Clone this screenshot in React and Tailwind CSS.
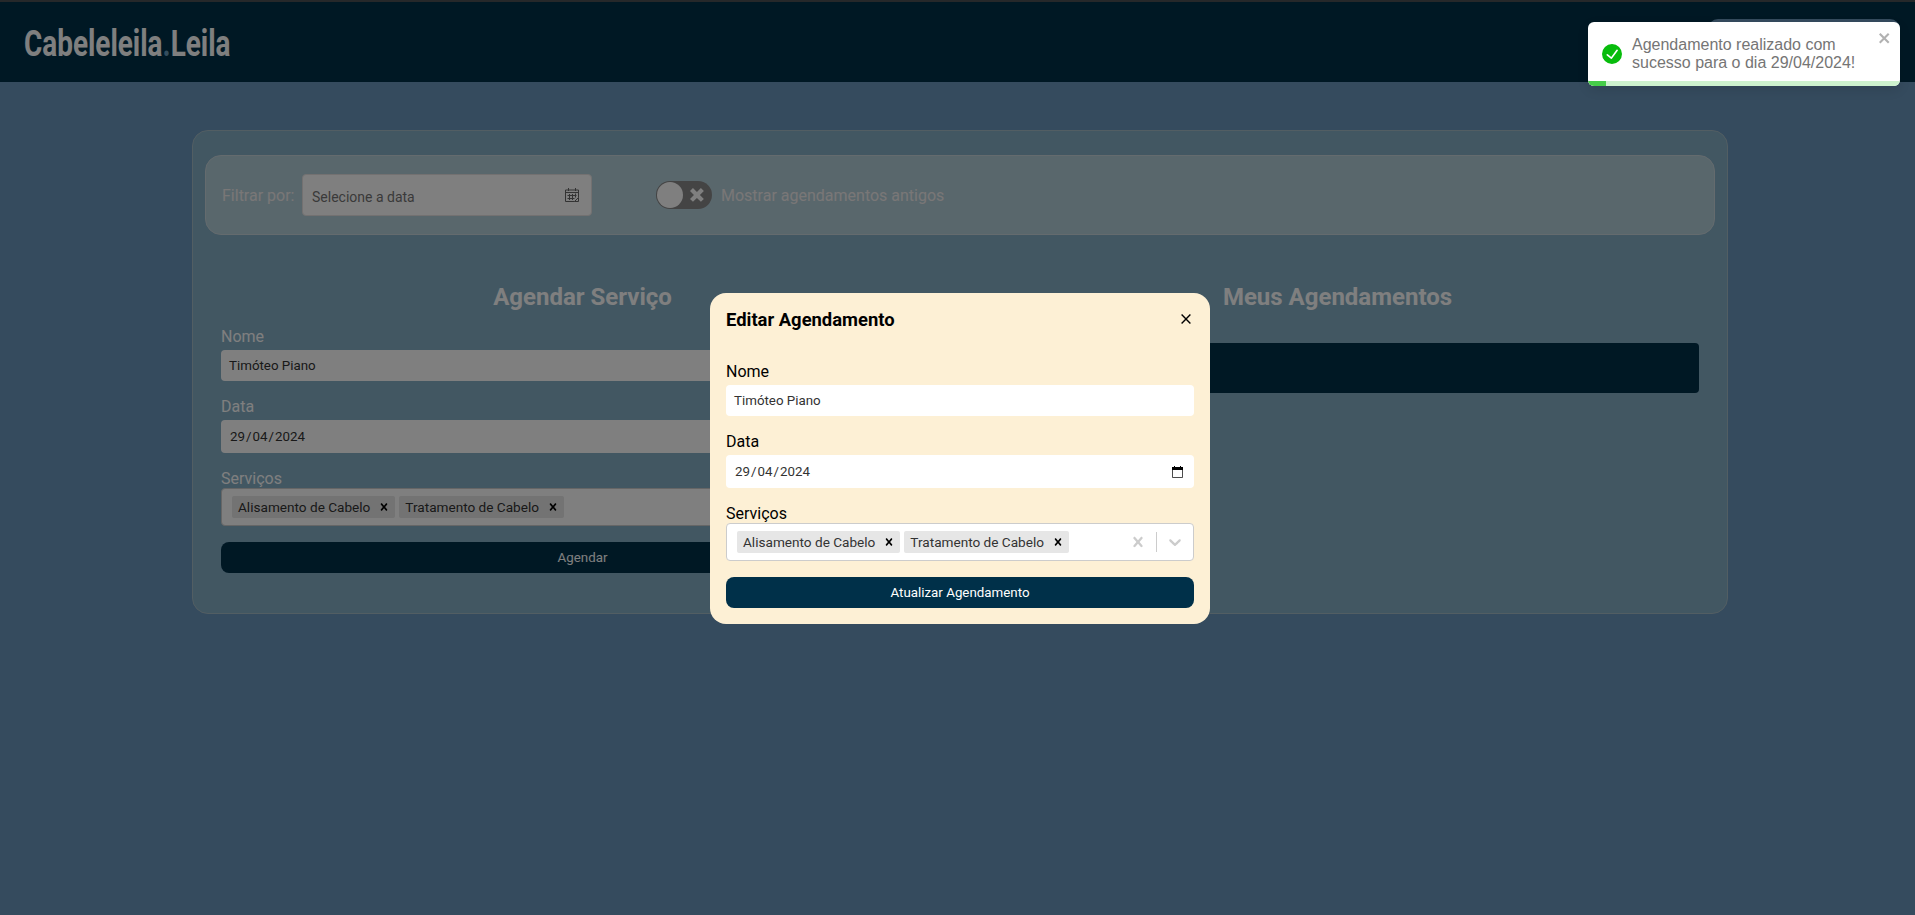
const CROSS = "M14.348 14.849c-0.469 0.469-1.229 0.469-1.697 0l-2.651-3.030-2.651 3.029c-0.469 0.469-1.229 0.469-1.697 0-0.469-0.469-0.469-1.229 0-1.697l2.758-3.15-2.759-3.152c-0.469-0.469-0.469-1.228 0-1.697s1.228-0.469 1.697 0l2.652 3.031 2.651-3.031c0.469-0.469 1.228-0.469 1.697 0s0.469 1.229 0 1.697l-2.758 3.152 2.758 3.15c0.469 0.469 0.469 1.229 0 1.698z";
const CHEVRON = "M4.516 7.548c0.436-0.446 1.043-0.481 1.576 0l3.908 3.747 3.908-3.747c0.533-0.481 1.141-0.446 1.574 0 0.436 0.445 0.408 1.197 0 1.615-0.406 0.418-4.695 4.502-4.695 4.502-0.217 0.223-0.502 0.335-0.787 0.335s-0.57-0.112-0.789-0.335c0 0-4.287-4.084-4.695-4.502s-0.436-1.17 0-1.615z";

function Icon20({ d, className }) {
  return (
    <svg viewBox="0 0 20 20" className={className} fill="currentColor">
      <path d={d} />
    </svg>
  );
}

function Tag({ children }) {
  return (
    <div className="m-0.5 flex h-[22px] items-center rounded-[2px] bg-[#e6e6e6]">
      <span className="pr-[3px] pl-1.5 text-[13.6px] leading-4 whitespace-nowrap text-[#333]">{children}</span>
      <span className="flex h-full items-center px-1 text-black">
        <Icon20 d={CROSS} className="size-3.5" />
      </span>
    </div>
  );
}

function BookingForm({ action }) {
  return (
    <form className="flex flex-col">
      <label className="mb-1 h-[19px] leading-[19px]">Nome</label>
      <div className="mb-4 flex h-[31px] items-center rounded-[4px] bg-white px-2 text-[13.33px] text-[#333]">Timóteo Piano</div>
      <label className="mb-1 h-[19px] leading-[19px]">Data</label>
      <div className="mb-4 flex h-[33px] items-center justify-between rounded-[4px] bg-white pr-[11px] pl-[9px] text-[13.33px] text-[#333]">
        <span className="flex gap-px"><span>29</span><span>/</span><span>04</span><span>/</span><span>2024</span></span>
        <svg viewBox="0 0 11 12" className="h-3 w-[11px]" fill="none">
          <path d="M.5 2.500h10v9H.5z" stroke="#000" strokeOpacity="0.7" />
          <path d="M0 1h11v3H0zM2 0h1v1H2zM8 0h1v1H8z" fill="#000" />
        </svg>
      </div>
      <label className="h-[19px] leading-[19px]">Serviços</label>
      <div className="mb-4 flex h-[38px] items-center justify-between rounded-[4px] border border-[#ccc] bg-white text-[#ccc]">
        <div className="flex px-2">
          <Tag>Alisamento de Cabelo</Tag>
          <Tag>Tratamento de Cabelo</Tag>
        </div>
        <div className="flex items-center">
          <Icon20 d={CROSS} className="mx-2 size-5" />
          <span className="h-5 w-px bg-[#ccc]" />
          <Icon20 d={CHEVRON} className="mx-2 size-5" />
        </div>
      </div>
      <button type="button" className="h-[31px] rounded-[8px] bg-[#003049] text-[13.33px] text-white">{action}</button>
    </form>
  );
}

function Toast() {
  return (
    <div className="absolute top-[22px] left-[1588px] flex h-16 w-[312px] overflow-hidden rounded-[6px] bg-white pl-3.5 shadow-[0_4px_12px_rgba(0,0,0,0.1)]">
      <svg viewBox="0 0 24 24" className="mt-[22px] size-5 shrink-0" fill="#07bc0c">
        <path d="M12 0a12 12 0 1012 12A12.014 12.014 0 0012 0zm6.927 8.2l-6.845 9.289a1.011 1.011 0 01-1.43.188l-4.888-3.908a1 1 0 111.25-1.562l4.076 3.261 6.227-8.451a1 1 0 111.61 1.183z" />
      </svg>
      <p className="mt-3.5 ml-2.5 w-[246px] shrink-0 font-['Liberation_Sans',sans-serif] text-base leading-[18px] text-[#757575]">
        Agendamento realizado com<br />sucesso para o dia 29/04/2024!
      </p>
      <svg viewBox="0 0 14 16" className="mt-2 h-4 w-3.5 shrink-0 opacity-30" fill="#000">
        <path fillRule="evenodd" d="M7.71 8.23l3.75 3.75-1.48 1.48-3.75-3.75-3.750 3.750L1 11.98l3.750-3.750L1 4.480 2.480 3l3.750 3.750L9.980 3l1.480 1.480-3.750 3.750z" />
      </svg>
      <div className="absolute inset-x-0 bottom-0 h-[5px] bg-[#cdf2ce]">
        <div className="h-full w-[18px] bg-[#45cd49]" />
      </div>
    </div>
  );
}

function EditModal() {
  return (
    <section className="w-[500px] rounded-[16px] bg-[#fdf0d5] p-4 text-black">
      <div className="mb-[31px] flex h-[22px] items-center justify-between">
        <h2 className="text-[18.4px] leading-[22px] font-bold">Editar Agendamento</h2>
        <svg viewBox="0 0 10 10" className="mr-[3px] mb-0.5 size-2.5" stroke="#000" strokeWidth="1.4">
          <path d="M.6.6l8.800 8.800M9.400.6L.6 9.400" />
        </svg>
      </div>
      <BookingForm action="Atualizar Agendamento" />
    </section>
  );
}

export default function App() {
  return (
    <div className="h-[915px] w-full overflow-hidden font-[Roboto,sans-serif] text-base">
      <div className="relative h-full w-[1920px] bg-[#6a96bc]">
        <div className="h-0.5 bg-[#4d5055]" />
        <header className="flex h-20 items-center justify-between bg-[#003049] pr-5 pl-6">
          <h1 className="mt-1 w-[206px] origin-left scale-x-[0.775] text-[36px] leading-none font-bold whitespace-nowrap text-white">
            Cabeleleila<span className="text-[#669bbc]">.</span>Leila
          </h1>
          <div className="h-[46px] w-[192px] rounded-[10px] bg-[#6a96bc]" />
        </header>
        <main className="mx-auto mt-12 h-[484px] w-[1536px] rounded-[16px] border border-[#a5bcc6] bg-[#84aec5] px-3 pt-6 text-white">
          <div className="flex h-20 items-center rounded-[16px] border border-[#c8d6dc] bg-[#b3ced9] pl-4">
            <span className="mt-0.5 w-20 text-[#f2eeee]">Filtrar por:</span>
            <div className="flex h-[42px] w-[290px] items-center justify-between rounded-[4px] border border-[#e6e2e2] bg-white pr-3 pl-[9px] text-[14px] text-[#757575]">
              <span className="mt-1">Selecione a data</span>
              <svg viewBox="0 0 14 14" className="size-3.5" fill="none" stroke="#666">
                <path d="M9.500 13.500h-9V2h13v7.500l-4 4M.5 4.500h13M3.500 0v3M10.500 0v3M4.500 6v6M7.500 6v6M10.500 5.500v4M2.500 7.500h9M2.500 10.500h7M13.500 9.500v4h-4" />
              </svg>
            </div>
            <div className="ml-16 flex h-7 w-14 items-center justify-between rounded-full bg-[#888] p-px pr-[5px]">
              <span className="size-[26px] rounded-full bg-white" />
              <svg viewBox="-2 -5 14 20" className="h-7 w-5" fill="#fff">
                <path d="M9.9 2.12L7.78 0 4.95 2.828 2.12 0 0 2.12l2.83 2.83L0 7.776 2.123 9.9 4.95 7.07 7.78 9.9 9.9 7.776 7.072 4.95 9.9 2.12" />
              </svg>
            </div>
            <span className="mt-0.5 ml-[9px] text-[#f2eeee]">Mostrar agendamentos antigos</span>
          </div>
          <div className="grid grid-cols-2 gap-8 px-4 pt-[46px]">
            <section>
              <h2 className="mb-[14px] text-center text-2xl leading-8 font-bold">Agendar Serviço</h2>
              <BookingForm action="Agendar" />
            </section>
            <section>
              <h2 className="mb-[30px] text-center text-2xl leading-8 font-bold">Meus Agendamentos</h2>
              <div className="h-[50px] rounded-[4px] bg-[#003049]" />
            </section>
          </div>
        </main>
        <div className="absolute inset-0 flex items-start justify-center bg-black/50 pt-[293px]">
          <EditModal />
        </div>
        <Toast />
      </div>
    </div>
  );
}
